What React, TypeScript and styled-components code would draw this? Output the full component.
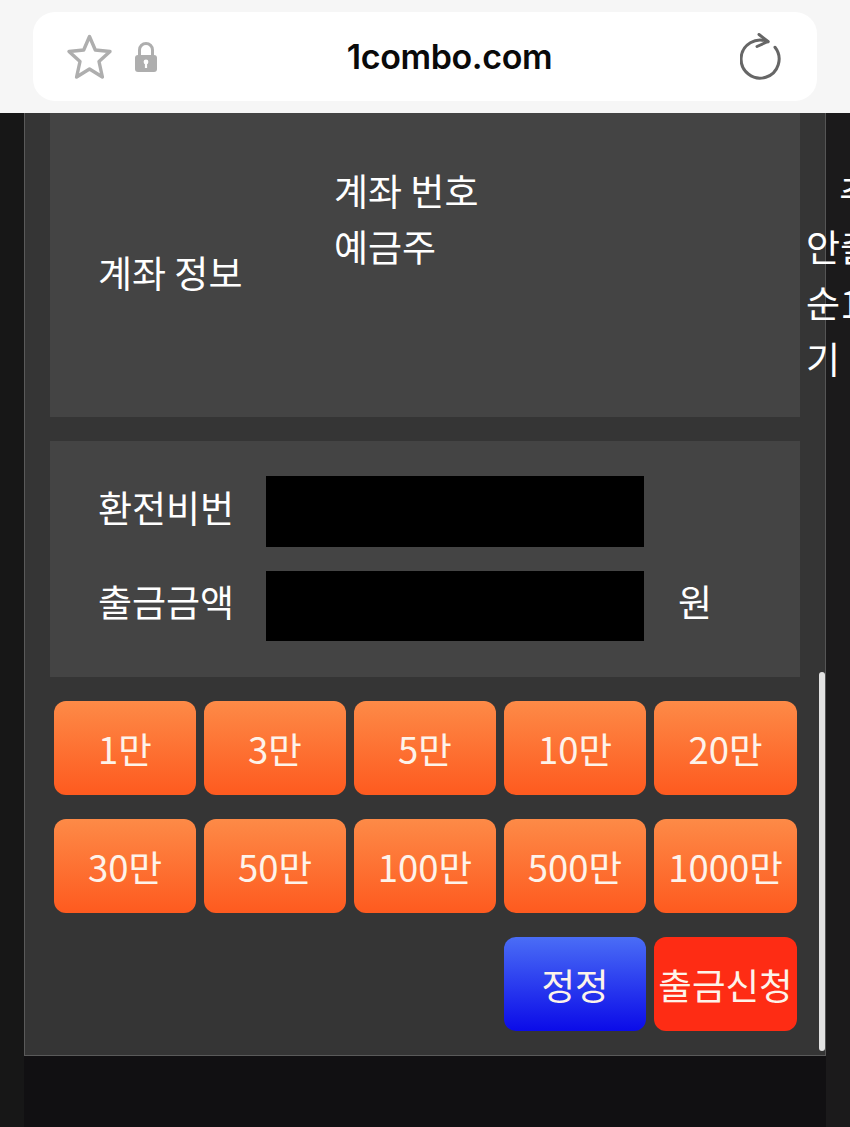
import React from 'react';
import styled, { createGlobalStyle } from 'styled-components';

const GlobalStyle = createGlobalStyle`
  html, body {
    margin: 0;
    padding: 0;
    width: 850px;
    height: 1127px;
    overflow: hidden;
    background: #111012;
    font-family: "Noto Sans CJK KR", "Noto Sans", sans-serif;
  }
  * { box-sizing: border-box; }
`;

const Page = styled.div`
  width: 850px;
  height: 1127px;
  display: flex;
  flex-direction: column;
  overflow: hidden;
`;

const BrowserBar = styled.header`
  height: 113px;
  flex: none;
  padding: 12px 33px;
  background: #f6f6f6;
`;

const AddressPill = styled.div`
  height: 89px;
  background: #fff;
  border-radius: 22px;
  display: flex;
  align-items: center;
  padding: 0 35px 0 33px;
`;

const LeftIcons = styled.div`
  display: flex;
  align-items: center;
  gap: 21px;
  width: 126px;
`;

const Url = styled.div`
  flex: 1;
  text-align: center;
  font-family: Inter, "Liberation Sans", sans-serif;
  font-size: 34px;
  font-weight: 600;
  letter-spacing: -0.4px;
  color: #0a0a0a;
  padding-right: 33px;
`;

const Viewport = styled.div`
  flex: 1;
  display: flex;
  min-height: 0;
`;

const Gutter = styled.div<{ $shade: string }>`
  flex: none;
  width: 24px;
  background: ${p => p.$shade};
`;

const Center = styled.div`
  flex: none;
  width: 802px;
  display: flex;
  flex-direction: column;
`;

const Panel = styled.main`
  position: relative;
  height: 943px;
  flex: none;
  background: #353535;
  border-left: 1px solid #5a5a5a;
  border-right: 1px solid #555;
  border-bottom: 1px solid #5a5a5a;
  padding: 0 25px;
  display: flex;
  flex-direction: column;
  gap: 24px;
`;

const FooterFill = styled.div`
  flex: 1;
  background: #111012;
`;

const Scrollbar = styled.div`
  position: absolute;
  right: 0;
  top: 559px;
  bottom: 4px;
  width: 6px;
  border-radius: 3px;
  background: #e2e2e2;
`;

const AccountCard = styled.section`
  height: 304px;
  flex: none;
  background: #444;
  display: flex;
  align-items: flex-start;
  color: #fff;
  font-size: 37px;
  line-height: 56px;
`;

const AccountLabel = styled.div`
  flex: none;
  width: 284px;
  padding: 131px 0 0 48px;
`;

const AccountDetails = styled.div`
  flex: none;
  width: 472px;
  padding-top: 49px;
`;

const AccountNote = styled.div`
  flex: none;
  width: 200px;
  padding-top: 49px;
  white-space: pre;
`;

const FormCard = styled.section`
  height: 236px;
  flex: none;
  background: #444;
  padding: 35px 0 0 48px;
  display: grid;
  grid-template-columns: 168px 378px auto;
  grid-template-rows: 71px 70px;
  row-gap: 24px;
  align-items: center;
  justify-content: start;
  color: #fff;
  font-size: 37px;
`;

const FormLabel = styled.label`
  padding-bottom: 10px;
`;

const BlackInput = styled.div`
  height: 100%;
  background: #000;
`;

const Unit = styled.span`
  padding: 0 0 10px 34px;
`;

const ButtonGrid = styled.section`
  margin-left: 4px;
  display: grid;
  grid-template-columns: repeat(4, 142px) 143px;
  grid-auto-rows: 94px;
  gap: 24px 8px;
`;

const tones = {
  orange: 'linear-gradient(180deg, #fd8a47 0%, #fe5a1f 100%)',
  blue: 'linear-gradient(180deg, #4a6df6 0%, #0b0be8 100%)',
  red: '#fe2c14',
};

const ActionButton = styled.button<{ $tone: keyof typeof tones; $col?: number }>`
  border: 0;
  padding: 0;
  border-radius: 12px;
  background: ${p => tones[p.$tone]};
  color: #fdf3ea;
  font-family: inherit;
  font-size: 36.5px;
  white-space: nowrap;
  display: flex;
  align-items: center;
  justify-content: center;
  ${p => (p.$col ? `grid-column: ${p.$col};` : '')}
`;

const StarIcon = () => (
  <svg width="47" height="46" viewBox="0 0 47 46" fill="none">
    <path
      d="M23.5 2.5 L29.3 16 L44 17.5 L33 27.5 L36.4 43 L23.5 35 L10.6 43 L14 27.5 L3 17.5 L17.7 16 Z"
      stroke="#aeaeae"
      strokeWidth="3.4"
      strokeLinejoin="round"
    />
  </svg>
);

const LockIcon = () => (
  <svg width="24" height="30" viewBox="0 0 24 30">
    <path d="M5.5 15 V8 a6.5 6.5 0 0 1 13 0 V15" fill="none" stroke="#aeaeae" strokeWidth="3" />
    <rect x="1" y="13" width="22" height="17" rx="3" fill="#aeaeae" />
    <circle cx="12" cy="20" r="2.4" fill="#fff" />
    <rect x="10.9" y="20.5" width="2.2" height="5.5" fill="#fff" />
  </svg>
);

const ReloadIcon = () => (
  <svg width="42" height="48" viewBox="0 0 42 48" fill="none">
    <path d="M28 8.8 A19 19 0 1 0 35 14.3" stroke="#666" strokeWidth="3" strokeLinecap="round" />
    <path d="M19 1.5 L28 8.5 L17 13.5" stroke="#666" strokeWidth="3" strokeLinecap="round" strokeLinejoin="round" />
  </svg>
);

const amounts = ['1만', '3만', '5만', '10만', '20만', '30만', '50만', '100만', '500만', '1000만'];

export default function App() {
  return (
    <Page>
      <GlobalStyle />
      <BrowserBar>
        <AddressPill>
          <LeftIcons>
            <StarIcon />
            <LockIcon />
          </LeftIcons>
          <Url>1combo.com</Url>
          <ReloadIcon />
        </AddressPill>
      </BrowserBar>
      <Viewport>
        <Gutter $shade="#171717" />
        <Center>
          <Panel>
            <AccountCard>
              <AccountLabel>계좌 정보</AccountLabel>
              <AccountDetails>
                계좌 번호
                <br />
                예금주
              </AccountDetails>
              <AccountNote>{'    추\n안출\n순1\n기'}</AccountNote>
            </AccountCard>
            <FormCard>
              <FormLabel>환전비번</FormLabel>
              <BlackInput />
              <span />
              <FormLabel>출금금액</FormLabel>
              <BlackInput />
              <Unit>원</Unit>
            </FormCard>
            <ButtonGrid>
              {amounts.map(a => (
                <ActionButton key={a} $tone="orange">
                  {a}
                </ActionButton>
              ))}
              <ActionButton $tone="blue" $col={4}>
                정정
              </ActionButton>
              <ActionButton $tone="red">출금신청</ActionButton>
            </ButtonGrid>
            <Scrollbar />
          </Panel>
          <FooterFill />
        </Center>
        <Gutter $shade="#1b1a1b" />
      </Viewport>
    </Page>
  );
}
